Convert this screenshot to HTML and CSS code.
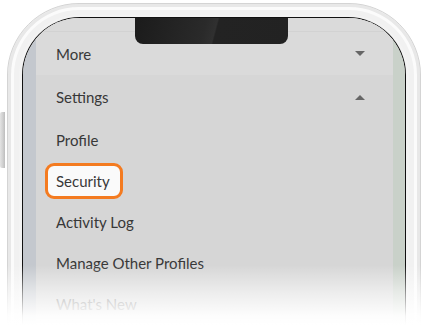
FILE: index.html
```html
<!DOCTYPE html>
<html>
<head>
<meta charset="utf-8">
<link rel="stylesheet" href="styles.css">
</head>
<body>
<div class="stage">
  <div class="side-button"></div>
  <div class="phone">
    <div class="screen">
      <div class="notch"></div>
      <div class="strip-left"></div>
      <div class="panel">
        <div class="top-gap"></div>
        <div class="row row-head row-more">
          <span>More</span>
          <span class="tri tri-down"></span>
        </div>
        <div class="row row-head">
          <span>Settings</span>
          <span class="tri tri-up"></span>
        </div>
        <div class="row row-sub"><span>Profile</span></div>
        <div class="row row-sub"><span class="highlight">Security</span></div>
        <div class="row row-sub"><span>Activity Log</span></div>
        <div class="row row-sub"><span>Manage Other Profiles</span></div>
        <div class="row row-sub"><span class="faded">What's New</span></div>
      </div>
      <div class="strip-right"></div>
    </div>
  </div>
  <div class="fade"></div>
</div>
</body>
</html>
```
FILE: styles.css
```css
html, body {
  margin: 0;
  padding: 0;
  background: #ffffff;
  overflow: hidden;
}
body {
  width: 425px;
  height: 325px;
  font-family: "Lato", "Open Sans", sans-serif;
}
.stage {
  position: relative;
  width: 425px;
  height: 325px;
  overflow: hidden;
  display: flex;
  align-items: flex-start;
}
.side-button {
  width: 5px;
  height: 56px;
  margin-top: 112px;
  margin-right: 2px;
  border-radius: 2px 0 0 2px;
  background: linear-gradient(90deg, #e4e4e4, #cfcfcf 60%, #bdbdbd);
}
.phone {
  margin-top: 3px;
  width: 414px;
  height: 400px;
  padding: 13px 14px 0 14px;
  border: 1px solid #d4d4d4;
  border-radius: 72px 72px 0 0;
  background: #f3f3f3;
  box-shadow: inset 0 0 0 3px #e8e8e8, inset 0 0 0 6px #fbfbfb, inset 0 0 0 11px #f1f1f1;
  box-sizing: border-box;
}
.screen {
  position: relative;
  height: 400px;
  border: 1px solid #111;
  border-bottom: none;
  border-radius: 58px 58px 0 0;
  overflow: hidden;
  display: flex;
  background: #d6d6d6;
}
.notch {
  position: absolute;
  left: 112px;
  top: 0;
  width: 153px;
  height: 26px;
  border-radius: 0 0 8px 8px;
  background: linear-gradient(105deg, #1b1b1b 0%, #2a2a2a 45%, #303030 52%, #232323 53%, #222 100%);
  z-index: 2;
}
.strip-left {
  width: 13px;
  flex: none;
  background: #c4c8ce;
}
.strip-right {
  width: 12px;
  flex: none;
  background: #c9d1c9;
}
.panel {
  flex: 1;
  display: flex;
  flex-direction: column;
  background: #d6d6d6;
  color: #383838;
  font-size: 15px;
}
.top-gap {
  height: 13px;
  background: #dadada;
  border-bottom: 1px solid #d2d2d2;
  flex: none;
}
.row {
  display: flex;
  align-items: center;
  justify-content: space-between;
  padding-left: 20px;
  padding-right: 28px;
  flex: none;
}
.row-head {
  height: 44px;
}
.row-more {
  background: #dadada;
  height: 43px;
}
.row-sub {
  height: 41px;
}
.tri {
  width: 0;
  height: 0;
  border-left: 5px solid transparent;
  border-right: 5px solid transparent;
}
.tri-down {
  border-top: 5px solid #666;
}
.tri-up {
  border-bottom: 5px solid #666;
}
.highlight {
  display: inline-flex;
  align-items: center;
  height: 30px;
  margin-left: -11px;
  padding: 0 10px 0 8px;
  border: 3px solid #f47b20;
  border-radius: 9px;
  background: #fafafa;
}
.faded {
  color: #777;
}
.fade {
  position: absolute;
  left: 0;
  right: 0;
  bottom: 0;
  height: 60px;
  background: linear-gradient(180deg, rgba(255,255,255,0) 0%, rgba(255,255,255,0.55) 45%, rgba(255,255,255,0.95) 85%, #fff 100%);
  z-index: 5;
}
```
